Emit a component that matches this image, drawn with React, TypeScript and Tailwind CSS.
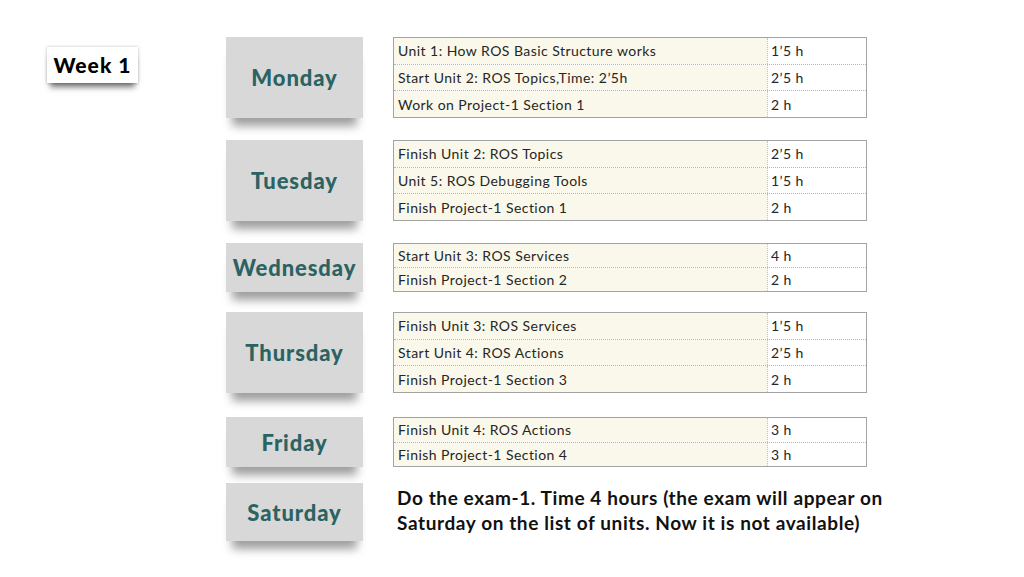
// Week 1 study plan slide: day labels on the left, task tables on the right.

type Task = { name: string; hours: string };

type Day = {
    label: string;
    /** top margin before this block */
    gapClass: string;
    heightClass: string;
    tasks?: Task[];
    note?: string;
};

const days: Day[] = [
    {
        label: 'Monday',
        gapClass: 'mt-[37px]',
        heightClass: 'h-[81px]',
        tasks: [
            { name: 'Unit 1: How ROS Basic Structure works', hours: '1’5 h' },
            { name: 'Start Unit 2: ROS Topics,Time: 2’5h', hours: '2’5 h' },
            { name: 'Work on Project-1 Section 1', hours: '2 h' },
        ],
    },
    {
        label: 'Tuesday',
        gapClass: 'mt-[22px]',
        heightClass: 'h-[81px]',
        tasks: [
            { name: 'Finish Unit 2: ROS Topics', hours: '2’5 h' },
            { name: 'Unit 5: ROS Debugging Tools', hours: '1’5 h' },
            { name: 'Finish Project-1 Section 1', hours: '2 h' },
        ],
    },
    {
        label: 'Wednesday',
        gapClass: 'mt-[22px]',
        heightClass: 'h-[49px]',
        tasks: [
            { name: 'Start Unit 3: ROS Services', hours: '4 h' },
            { name: 'Finish Project-1 Section 2', hours: '2 h' },
        ],
    },
    {
        label: 'Thursday',
        gapClass: 'mt-[20px]',
        heightClass: 'h-[81px]',
        tasks: [
            { name: 'Finish Unit 3: ROS Services', hours: '1’5 h' },
            { name: 'Start Unit 4: ROS Actions', hours: '2’5 h' },
            { name: 'Finish Project-1 Section 3', hours: '2 h' },
        ],
    },
    {
        label: 'Friday',
        gapClass: 'mt-[24px]',
        heightClass: 'h-[50px]',
        tasks: [
            { name: 'Finish Unit 4: ROS Actions', hours: '3 h' },
            { name: 'Finish Project-1 Section 4', hours: '3 h' },
        ],
    },
    {
        label: 'Saturday',
        gapClass: 'mt-[16px]',
        heightClass: 'h-[58px]',
        note: 'Do the exam-1. Time 4 hours (the exam will appear on Saturday on the list of units. Now it is not available)',
    },
];

function DayLabel({ day }: { day: Day }) {
    return (
        <div
            className={`${day.heightClass} w-[137px] shrink-0 flex items-center justify-center bg-[#d8d8d8] shadow-[0_14px_9px_-6px_rgba(0,0,0,0.38)]`}
        >
            <span className="text-[22px] font-black text-[#2b6262] tracking-[0.9px]">
                {day.label}
            </span>
        </div>
    );
}

function TaskTable({ day }: { day: Day }) {
    const tasks = day.tasks ?? [];
    return (
        <div className={`${day.heightClass} w-[474px] border border-[#a3a3a3] flex flex-col`}>
            {tasks.map((t, i) => (
                <div
                    key={t.name}
                    className={`flex-1 flex text-[14px] tracking-[0.45px] text-[#262626] ${
                        i > 0 ? 'border-t border-dotted border-[#b5b5b5]' : ''
                    }`}
                >
                    <div className="w-[374px] bg-[#faf8ea] pl-[4px] flex items-center border-r border-dotted border-[#c4c4c4]">
                        {t.name}
                    </div>
                    <div className="flex-1 bg-white pl-[3px] flex items-center">{t.hours}</div>
                </div>
            ))}
        </div>
    );
}

export default function App() {
    return (
        <div
            className="w-[1024px] h-[577px] bg-white relative overflow-hidden"
            style={{ fontFamily: 'Lato, "Noto Sans", sans-serif' }}
        >
            <div className="absolute left-[47px] top-[47px] w-[91px] h-[36px] bg-white flex items-center justify-center shadow-[0_0_3px_rgba(0,0,0,0.25),0_7px_6px_-3px_rgba(0,0,0,0.55)]">
                <span className="text-[21px] font-black text-black tracking-[1px]">Week 1</span>
            </div>

            <div className="flex flex-col pl-[226px]">
                {days.map((day) => (
                    <div key={day.label} className={`${day.gapClass} flex gap-[30px]`}>
                        <DayLabel day={day} />
                        {day.note ? (
                            <p className="pt-[2px] pl-[4px] w-[500px] text-[19px] leading-[25px] font-bold tracking-[0.6px] text-[#111]">
                                {day.note}
                            </p>
                        ) : (
                            <TaskTable day={day} />
                        )}
                    </div>
                ))}
            </div>
        </div>
    );
}
